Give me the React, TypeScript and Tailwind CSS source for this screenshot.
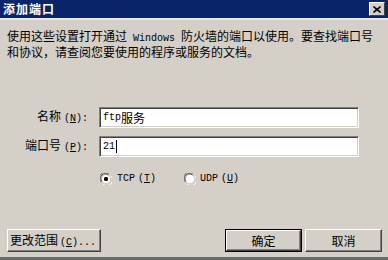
import React from "react";

const cjk = { fontFamily: '"Noto Sans CJK SC", "Liberation Sans", sans-serif' };
const mono = { fontFamily: '"Liberation Mono", monospace' };

function Radio({ checked }: { checked: boolean }) {
  return (
    <svg width="12" height="12" viewBox="0 0 12 12" className="shrink-0">
      <path d="M1 9 A5.5 5.5 0 0 1 9 1" fill="none" stroke="#808080" strokeWidth="1" />
      <path d="M2 8.5 A4.5 4.5 0 0 1 8.5 2" fill="none" stroke="#404040" strokeWidth="1" />
      <circle cx="6" cy="6" r="4" fill="#ffffff" />
      <path d="M11 3 A5.5 5.5 0 0 1 3 11" fill="none" stroke="#ffffff" strokeWidth="1" />
      <path d="M10 3.5 A4.5 4.5 0 0 1 3.5 10" fill="none" stroke="#d4d0c8" strokeWidth="1" />
      {checked && <rect x="4" y="4" width="4" height="4" rx="1.5" fill="#000" />}
    </svg>
  );
}

function Field({ label, hot, rest, value, cursor }: { label: string; hot: string; rest: string; value: React.ReactNode; cursor?: boolean }) {
  return (
    <div className="flex items-center">
      <div className="w-[89px] text-right text-[12px] leading-[14px] text-black whitespace-nowrap pr-[1px]" style={cjk}>
        {label}
        <span style={mono} className="text-[10px] ml-[3px]">(<u>{hot}</u>){rest}</span>
      </div>
      <div className="ml-[10px] w-[260px] h-[21px] border border-t-[#808080] border-l-[#808080] border-b-white border-r-white shadow-[inset_1px_1px_0_#404040,inset_-1px_-1px_0_#d4d0c8] bg-white flex items-center pl-[3px] text-[12px] text-black" style={cjk}>
        {value}
        {cursor && <span className="w-[1px] h-[13px] bg-black ml-[1px]" />}
      </div>
    </div>
  );
}

function Btn({ children, def, w }: { children: React.ReactNode; def?: boolean; w: string }) {
  const inner = (
    <div className="h-full w-full border border-t-white border-l-white border-b-[#404040] border-r-[#404040] shadow-[inset_-1px_-1px_0_#808080,inset_1px_1px_0_#d4d0c8] flex items-center justify-center text-[12px] text-black bg-[#d4d0c8] whitespace-nowrap" style={cjk}>
      {children}
    </div>
  );
  return (
    <div className={`${w} h-[23px] ${def ? "border border-black" : ""}`}>{inner}</div>
  );
}

export default function App() {
  return (
    <div className="w-[388px] h-[260px] bg-[#d4d0c8] flex flex-col overflow-hidden" style={cjk}>
      <div className="h-[18px] bg-[#0a246a] flex items-center justify-between pl-[3px] pr-[3px] shrink-0">
        <span className="text-white font-bold text-[12px] leading-[14px] tracking-[1px]" style={cjk}>添加端口</span>
        <div className="w-[16px] h-[14px] bg-[#d4d0c8] border border-t-white border-l-white border-b-[#404040] border-r-[#404040] flex items-center justify-center">
          <svg width="8" height="7" viewBox="0 0 8 7">
            <path d="M0.5 0.5 L7.5 6.5 M7.5 0.5 L0.5 6.5" stroke="#000" strokeWidth="1.6" />
          </svg>
        </div>
      </div>
      <div className="h-[2px] bg-[#e8e6e0] shrink-0" />
      <div className="pl-[7px] mt-[9px] text-[12px] leading-[13px] text-black whitespace-nowrap" style={cjk}>
        <div>使用这些设置打开通过<span style={mono} className="text-[10px]"> Windows </span>防火墙的端口以使用。要查找端口号</div>
        <div>和协议，请查阅您要使用的程序或服务的文档。</div>
      </div>
      <div className="mt-[49px] flex flex-col gap-[8px]">
        <Field label="名称" hot="N" rest=":" value={<><span style={mono} className="text-[10px]">ftp</span>服务</>} />
        <Field label="端口号" hot="P" rest=":" value={<span style={mono} className="text-[10px]">21</span>} cursor />
      </div>
      <div className="mt-[14px] flex items-center pl-[100px] text-[10px] text-black whitespace-nowrap" style={mono}>
        <div className="flex items-center w-[84px]">
          <Radio checked />
          <span className="ml-[5px]">TCP<span className="ml-[3px]">(<u>T</u>)</span></span>
        </div>
        <div className="flex items-center">
          <Radio checked={false} />
          <span className="ml-[4px]">UDP<span className="ml-[3px]">(<u>U</u>)</span></span>
        </div>
      </div>
      <div className="flex-1" />
      <div className="flex items-center pl-[7px] pr-[6px] mb-[5px]">
        <Btn w="w-[94px]">
          <span className="w-full text-left pl-[2px]">更改范围<span style={mono} className="text-[10px] ml-[2px]">(<u>C</u>)...</span></span>
        </Btn>
        <div className="flex-1" />
        <Btn w="w-[77px]" def>确定</Btn>
        <div className="w-[3px]" />
        <Btn w="w-[77px]">取消</Btn>
      </div>
      <div className="h-[3px] bg-[#6b6b6b] shrink-0" />
    </div>
  );
}
